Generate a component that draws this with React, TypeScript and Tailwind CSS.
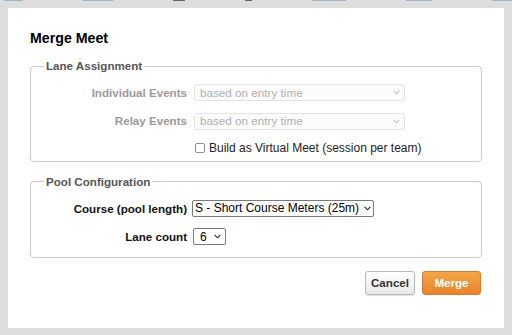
import React from "react";

const font = { fontFamily: '"Liberation Sans", Arial, Helvetica, sans-serif' };

const Chevron = ({ color }: { color: string }) => (
  <svg width="7" height="5" viewBox="0 0 7 5" className="shrink-0">
    <path d="M0.6 0.8 L3.5 3.8 L6.4 0.8" fill="none" stroke={color} strokeWidth="1.1" />
  </svg>
);

const DisabledSelect = ({ value }: { value: string }) => (
  <div className="w-[211px] h-[17px] flex items-center justify-between pl-[5px] pr-[4px] border border-[#e3e3e3] rounded-[3px] bg-[#fbfbfb] text-[11.7px] text-[#b0b0b0]">
    <span>{value}</span>
    <Chevron color="#c4c4c4" />
  </div>
);

const Select = ({ value, width }: { value: string; width: string }) => (
  <div
    className={`${width} h-[17px] flex items-center justify-between pl-[2px] pr-[2px] border border-[#7a7a7a] rounded-[2px] bg-white text-[12px] text-black`}
  >
    <span>{value}</span>
    <Chevron color="#222" />
  </div>
);

const Legend = ({ children }: { children: React.ReactNode }) => (
  <legend className="ml-[13px] px-[2px] text-[11.6px] leading-[14px] font-bold text-[#555]">
    {children}
  </legend>
);

export default function App() {
  return (
    <div style={font} className="w-[512px] h-[335px] bg-[#dddddd] flex flex-col overflow-hidden">
      <div className="h-[1px] flex gap-[60px] pl-[4px]">
        <span className="w-[22px] bg-[#9fb3c8]" />
        <span className="w-[36px] bg-[#9fb3c8]" />
        <span className="w-[14px] bg-[#666]" />
        <span className="w-[8px] bg-[#666]" />
        <span className="w-[40px] bg-[#9fb3c8]" />
        <span className="w-[30px] bg-[#9fb3c8]" />
        <span className="w-[24px] bg-[#9fb3c8]" />
      </div>
      <div className="pt-[7px] pl-[8px]">
        <div className="w-[496px] h-[320px] bg-white pt-[22px] pl-[22px] pr-[22px]">
          <h1 className="text-[14.2px] leading-[16px] font-bold text-black">Merge Meet</h1>

          <fieldset className="mt-[13px] border border-[#c9c9c9] rounded-[4px] pt-[11px] pb-[6px]">
            <Legend>Lane Assignment</Legend>
            <div className="grid grid-cols-[156px_auto] gap-x-[7px] gap-y-[11px] items-center">
              <div className="text-right text-[11.6px] font-bold text-[#9a9a9a]">Individual Events</div>
              <DisabledSelect value="based on entry time" />
              <div className="text-right text-[11.6px] font-bold text-[#9a9a9a]">Relay Events</div>
              <DisabledSelect value="based on entry time" />
              <div />
              <div className="flex items-center h-[14px]">
                <span className="w-[10px] h-[10px] ml-[1px] border border-[#8a8a8a] rounded-[2px] bg-white" />
                <span className="ml-[4px] text-[12px] text-[#222]">
                  Build as Virtual Meet (session per team)
                </span>
              </div>
            </div>
          </fieldset>

          <fieldset className="mt-[13px] border border-[#c9c9c9] rounded-[4px] pt-[11px] pb-[11px]">
            <Legend>Pool Configuration</Legend>
            <div className="grid grid-cols-[156px_auto] gap-x-[5px] gap-y-[11px] items-center">
              <div className="text-right text-[11.6px] font-bold text-[#111]">Course (pool length)</div>
              <Select value="S - Short Course Meters (25m)" width="w-[182px]" />
              <div className="text-right text-[11.6px] font-bold text-[#111]">Lane count</div>
              <div className="pl-[1px]">
                <div className="w-[33px] h-[17px] flex items-center justify-between pl-[6px] pr-[4px] border border-[#7a7a7a] rounded-[2px] bg-white text-[12px] text-black">
                  <span>6</span>
                  <Chevron color="#222" />
                </div>
              </div>
            </div>
          </fieldset>

          <div className="mt-[13px] mr-[1px] flex justify-end gap-[7px]">
            <button className="w-[50px] h-[24px] rounded-[3px] border border-[#b8b8b8] bg-gradient-to-b from-white to-[#e9e9e9] shadow-[0_1px_1px_rgba(0,0,0,0.12)] text-[11.6px] font-bold text-[#333]">
              Cancel
            </button>
            <button className="w-[59px] h-[24px] rounded-[3px] border border-[#d97a2c] bg-gradient-to-b from-[#f3a848] to-[#e8822c] text-[11.6px] font-bold text-white">
              Merge
            </button>
          </div>
        </div>
      </div>
    </div>
  );
}
